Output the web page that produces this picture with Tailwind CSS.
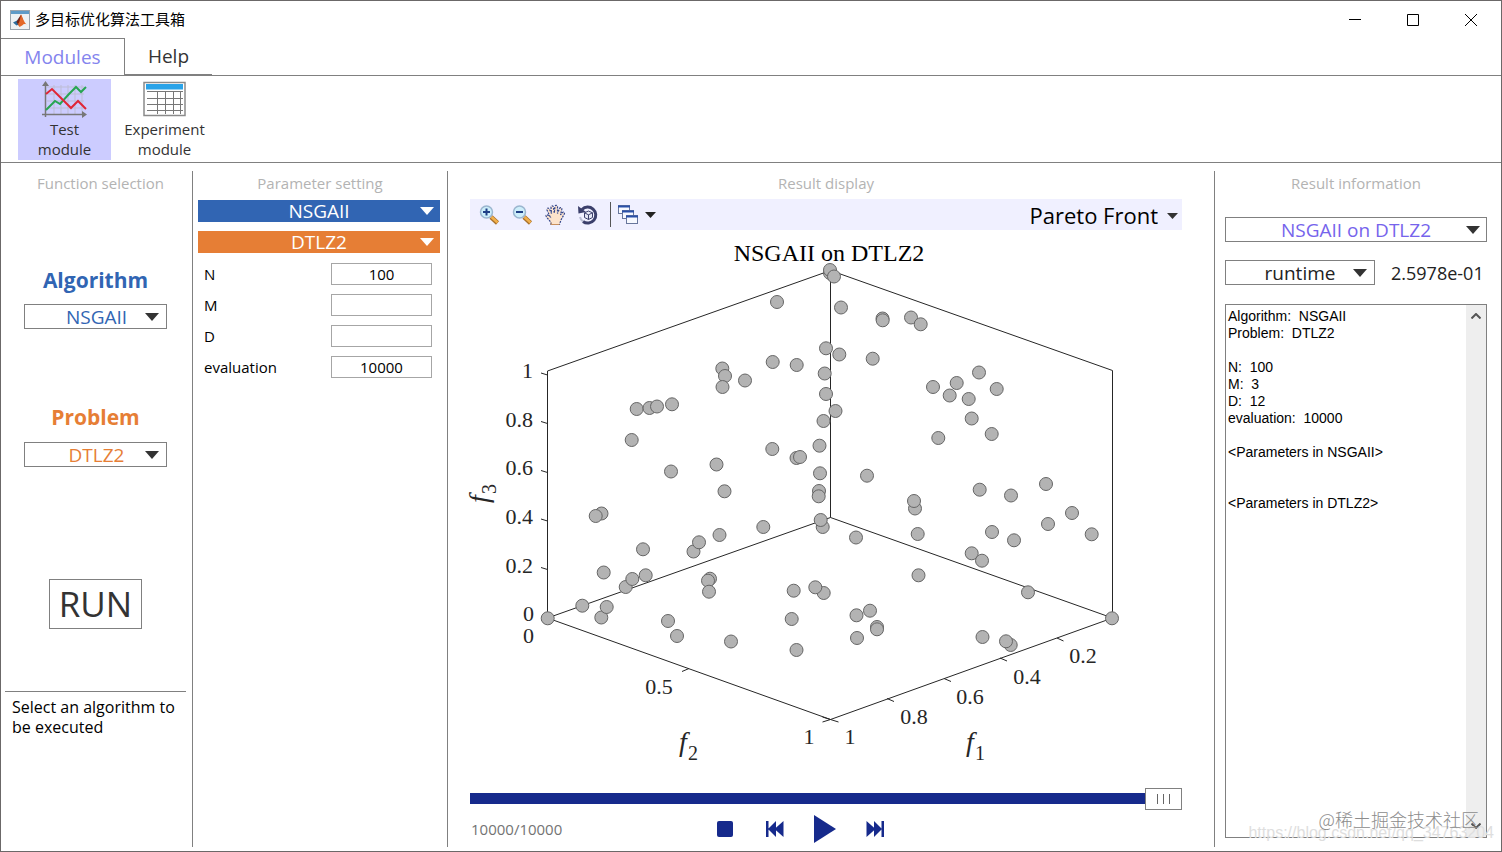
<!DOCTYPE html>
<html lang="zh-CN">
<head>
    <meta charset="UTF-8">
    <meta name="viewport" content="width=device-width, initial-scale=1.0">
    <title>多目标优化算法工具箱</title>
    <script src="https://cdn.jsdelivr.net/npm/@tailwindcss/browser@4"></script>
</head>
<body class="relative flex h-screen min-h-[852px] flex-col border border-[#6b6868] bg-white font-['Open_Sans','Noto_Sans_CJK_SC',sans-serif] text-[15px] text-black">

    <!-- Title bar -->
    <header class="flex h-[37px] shrink-0 items-center pr-px">
        <svg class="ml-[9px] h-5 w-5" viewBox="0 0 20 20">
            <rect x=".5" y=".5" width="19" height="19" fill="#eef1f4" stroke="#9aa4ae"/>
            <rect x="1" y="1" width="18" height="3" fill="#5f9bc8"/>
            <path d="M3 12.500l4-2 4-5-2 9-2.500 1z" fill="#2c6c9c"/>
            <path d="M6.500 12l4.500-7.500L13 10l-4 6z" fill="#7c2414"/>
            <path d="M11 4.500c1.500 2 2.500 7 5.500 10-2-.8-3-.4-4 .7L9.500 17 8 14c2-2 2-6 3-9.500z" fill="#e3682a"/>
        </svg>
        <h1 class="ml-[5px] flex-1">多目标优化算法工具箱</h1>
        <button class="flex h-full w-[58px] items-center justify-center" aria-label="Minimize">
            <svg class="h-3 w-3" viewBox="0 0 12 12" stroke="#000" fill="none"><path d="M0 5.500h12"/></svg>
        </button>
        <button class="flex h-full w-[58px] items-center justify-center" aria-label="Maximize">
            <svg class="h-3 w-3" viewBox="0 0 12 12" stroke="#000" fill="none"><path d="M.5.500h11v11H.5z"/></svg>
        </button>
        <button class="flex h-full w-[58px] items-center justify-center" aria-label="Close">
            <svg class="h-3 w-3" viewBox="0 0 12 12" stroke="#000" fill="none"><path d="M0 0l12 12M12 0L0 12"/></svg>
        </button>
    </header>

    <!-- Tabs -->
    <nav class="flex h-[38px] shrink-0 border-b border-[#808080] text-[19px]">
        <button class="w-[124px] border-t border-r border-[#808080] text-[#8484ee]">Modules</button>
        <button class="w-[87px] border-b border-[#808080] text-[#333]">Help</button>
    </nav>

    <!-- Module toolbar -->
    <div class="flex h-[87px] shrink-0 items-start gap-[7px] border-b border-[#808080] pt-[3px] pl-[17px] leading-5 text-[#333]">
        <button class="flex h-[81px] w-[93px] flex-col items-center bg-[#ccccff]">
            <svg class="mt-[2px] mb-px h-[37px] w-[46px]" viewBox="0 0 46 37" fill="none">
                <path d="M5 6h37M5 13h37M5 20h37M5 27h37M12 4v29M19 4v29M26 4v29M33 4v29M40 4v29" stroke="#bdbdd6"/>
                <path d="M3.500 36V3M0 33.500h42" stroke="#777" stroke-width="1.500"/>
                <path d="M3.500 0L7 5H0zM45 33.500L40 30v7z" fill="#777"/>
                <path d="M4 29l9-9 5 3 9-10 7-7 5 5 5-5" stroke="#27a552" stroke-width="2"/>
                <path d="M4 13l6-5 19 19 7-7 8 8" stroke="#e02536" stroke-width="2"/>
            </svg>
            <span>Test<br>module</span>
        </button>
        <button class="flex h-[81px] w-[93px] flex-col items-center">
            <svg class="mt-[2px] mb-px h-[37px] w-[44px]" viewBox="0 0 44 37" fill="none">
                <rect x="1" y="1.500" width="41" height="33" fill="#fff" stroke="#8a8a8a" stroke-width="1.500"/>
                <rect x="3" y="3" width="37" height="5.500" fill="#2aa3e8"/>
                <path d="M4 10.500h36M4 17.500h36M4 23.500h36M4 29.500h36M14.500 10v23M22.500 10v23M30.500 10v23M37.500 10v23" stroke="#777"/>
            </svg>
            <span>Experiment<br>module</span>
        </button>
    </div>

    <main class="flex min-h-0 flex-1 pt-2 pb-1">

        <!-- Function selection -->
        <section class="flex w-[192px] shrink-0 flex-col border-r border-[#808080]">
            <h2 class="pl-2 text-center leading-6 text-[#b3b3b3]">Function selection</h2>
            <div class="flex flex-col items-center pr-[6px] pl-1">
                <label for="algorithm" class="mt-[69px] text-[21px] leading-8 font-bold text-[#3165b3]">Algorithm</label>
                <div class="relative mt-2 h-[25px] w-[143px]">
                    <select id="algorithm" class="block h-full w-full appearance-none border border-[#808080] bg-white pr-[18px] pl-5 text-[19px] leading-[22px] text-[#3165b3] [text-align-last:center]">
                        <option>NSGAII</option>
                    </select>
                    <svg class="pointer-events-none absolute top-[9px] right-2 h-2 w-[14px]" viewBox="0 0 14 8" fill="#333"><path d="M0 0h14L7 8z"/></svg>
                </div>
                <label for="problem" class="mt-[72px] text-[21px] leading-8 font-bold text-[#e67e35]">Problem</label>
                <div class="relative mt-[9px] h-[25px] w-[143px]">
                    <select id="problem" class="block h-full w-full appearance-none border border-[#808080] bg-white pr-[18px] pl-5 text-[19px] leading-[22px] text-[#e67e35] [text-align-last:center]">
                        <option>DTLZ2</option>
                    </select>
                    <svg class="pointer-events-none absolute top-[9px] right-2 h-2 w-[14px]" viewBox="0 0 14 8" fill="#333"><path d="M0 0h14L7 8z"/></svg>
                </div>
                <button class="mt-28 h-[50px] w-[93px] border border-[#808080] text-[35px] leading-[48px] text-[#333]">RUN</button>
                <hr class="mt-[62px] w-full border-[#808080]">
                <p class="mt-[5px] w-full pl-[7px] text-base leading-5">Select an algorithm to be executed</p>
            </div>
        </section>

        <!-- Parameter setting -->
        <section class="w-[255px] shrink-0 border-r border-[#808080]">
            <h2 class="text-center leading-6 text-[#b3b3b3]">Parameter setting</h2>
            <div class="mt-[5px] flex flex-col gap-[9px] pr-[7px] pl-[5px] leading-[22px]">
                <button class="flex h-[22px] items-center bg-[#3165b3] pr-[6px] pl-5 text-[19px] leading-[22px] text-white">
                    <span class="flex-1">NSGAII</span>
                    <svg class="h-2 w-[14px]" viewBox="0 0 14 8" fill="#fff"><path d="M0 0h14L7 8z"/></svg>
                </button>
                <button class="flex h-[22px] items-center bg-[#e67e35] pr-[6px] pl-5 text-[19px] leading-[22px] text-white">
                    <span class="flex-1">DTLZ2</span>
                    <svg class="h-2 w-[14px]" viewBox="0 0 14 8" fill="#fff"><path d="M0 0h14L7 8z"/></svg>
                </button>
                <div class="mt-px flex items-center justify-between pr-2 pl-[6px]">
                    <label for="param-n">N</label>
                    <input id="param-n" type="text" value="100" class="h-[22px] w-[101px] border border-[#a6a6a6] text-center">
                </div>
                <div class="flex items-center justify-between pr-2 pl-[6px]">
                    <label for="param-m">M</label>
                    <input id="param-m" type="text" class="h-[22px] w-[101px] border border-[#a6a6a6] text-center">
                </div>
                <div class="flex items-center justify-between pr-2 pl-[6px]">
                    <label for="param-d">D</label>
                    <input id="param-d" type="text" class="h-[22px] w-[101px] border border-[#a6a6a6] text-center">
                </div>
                <div class="flex items-center justify-between pr-2 pl-[6px]">
                    <label for="param-evaluation">evaluation</label>
                    <input id="param-evaluation" type="text" value="10000" class="h-[22px] w-[101px] border border-[#a6a6a6] text-center">
                </div>
            </div>
        </section>

        <!-- Result display -->
        <section class="flex min-w-0 flex-1 flex-col border-r border-[#808080] pr-8 pl-[22px]">
            <h2 class="text-center leading-6 text-[#b3b3b3]">Result display</h2>
            <div class="mt-1 flex h-[31px] shrink-0 items-center bg-[#f0f0ff] pl-[2px]">
                <button class="flex w-[33px] justify-center" aria-label="Zoom in">
                    <svg class="h-[22px] w-[22px]" viewBox="0 0 22 22" fill="none">
                        <path d="M13 13l6.500 6" stroke="#a8702a" stroke-width="4.500"/>
                        <path d="M13.500 13l6 5.500" stroke="#f2b04c" stroke-width="2.500"/>
                        <circle cx="8.500" cy="8" r="6" fill="#cdeefa" stroke="#9bb6cf" stroke-width="1.500"/>
                        <path d="M5 8h7M8.500 4.500v7" stroke="#1f3f86" stroke-width="2"/>
                    </svg>
                </button>
                <button class="flex w-[33px] justify-center" aria-label="Zoom out">
                    <svg class="h-[22px] w-[22px]" viewBox="0 0 22 22" fill="none">
                        <path d="M13 13l6.500 6" stroke="#a8702a" stroke-width="4.500"/>
                        <path d="M13.500 13l6 5.500" stroke="#f2b04c" stroke-width="2.500"/>
                        <circle cx="8.500" cy="8" r="6" fill="#cdeefa" stroke="#9bb6cf" stroke-width="1.500"/>
                        <path d="M5 8h7" stroke="#1f3f86" stroke-width="2"/>
                    </svg>
                </button>
                <button class="flex w-[33px] justify-center" aria-label="Pan">
                    <svg class="h-[22px] w-[22px]" viewBox="0 0 22 22" fill="#fde3cb" stroke="#35488c">
                        <path d="M7 20.500v-2L2.500 13c-1.500-2 .5-3 2-1.500l1.500 1-3-6.500c-.5-2 1.500-2.500 2.300-1l2.200 4.500L7 3.500C7 1.500 9 1.500 9.400 3l.9 6 .7-6.500c.3-1.600 2.400-1.500 2.500.2V9.500l2-5c.8-1.500 2.600-.8 2.300.8L16.500 11l2-2.500c1.200-1 2.500.2 1.800 1.500L17 16l-1.500 4.500z" stroke-width="1.200" stroke-dasharray="2 1"/>
                        <path d="M7 20.500v-2M15.500 20.500H7" stroke="#c9905e"/>
                    </svg>
                </button>
                <button class="flex w-[33px] justify-center" aria-label="Rotate 3D">
                    <svg class="h-[22px] w-[22px]" viewBox="0 0 22 22" fill="none">
                        <path d="M5 5.500A8 8 0 1 1 6 17.500" stroke="#3b3f6b" stroke-width="3"/>
                        <path d="M1 2l.5 7.500L9 8z" fill="#3b3f6b"/>
                        <path d="M3 13a8 8 0 0 0 3 4.500" stroke="#b9bdd3" stroke-width="2"/>
                        <path d="M11.500 7l4 1.800v4.700l-4 2-4-2V8.800zM7.500 8.800l4 2 4-2M11.500 10.800v4.700" fill="#e4e6f4" stroke="#3b3f6b"/>
                    </svg>
                </button>
                <div class="mx-[6px] h-[25px] w-px bg-[#555]"></div>
                <button class="flex items-center gap-[6px]" aria-label="Figure windows">
                    <svg class="h-[22px] w-[22px]" viewBox="0 0 22 22" fill="#f7f9ff" stroke="#68769c">
                        <rect x="1.500" y="1.500" width="11" height="8"/><path d="M1 2.500h12" stroke="#2a50a8" stroke-width="2"/>
                        <rect x="5.500" y="6.500" width="11" height="8"/><path d="M5 7.500h12" stroke="#2a50a8" stroke-width="2"/>
                        <rect x="9.500" y="11.500" width="11" height="8"/><path d="M9 12.500h12" stroke="#2a50a8" stroke-width="2"/>
                    </svg>
                    <svg class="h-[6px] w-[11px]" viewBox="0 0 11 6" fill="#222"><path d="M0 0h11L5.500 6z"/></svg>
                </button>
                <div class="relative ml-auto">
                    <select aria-label="Display type" class="block h-[30px] w-[170px] appearance-none pr-6 text-[22px] leading-[30px] [text-align-last:right]">
                        <option>Pareto Front</option>
                    </select>
                    <svg class="pointer-events-none absolute top-[13px] right-1 h-[6px] w-[11px]" viewBox="0 0 11 6" fill="#333"><path d="M0 0h11L5.500 6z"/></svg>
                </div>
            </div>

            <svg class="min-h-0 w-full flex-1 overflow-visible font-['Liberation_Serif',serif]" viewBox="470 230 712 558" fill="#262626">
                <g fill="none" stroke="#262626">
                    <path d="M547.500 618V371L830.500 270.500 1112.500 370.500V618L830.500 517.500 547.500 618 830.500 719.500 1112.500 618M830.500 270.500v247"/>
                    <path d="M541 373l6.500 2M541 421.500l6.500 2M541 470.500l6.500 2M541 519l6.500 2M541 567.500l6.500 2M541 620.500l6.500-2M682 671.500l7-3M822.500 722l8-2.500M838.500 722l-16-5M887 698.500l7 3M944 678.500l7 3M1000 658l7 3M1057 638l6.500 3"/>
                </g>
                <text x="829" y="261" font-size="24" fill="#000" text-anchor="middle">NSGAII on DTLZ2</text>
                <g font-size="22" text-anchor="end">
                    <text x="533" y="378">1</text>
                    <text x="533" y="427">0.8</text>
                    <text x="533" y="475">0.6</text>
                    <text x="533" y="524">0.4</text>
                    <text x="533" y="573">0.2</text>
                    <text x="534" y="621">0</text>
                    <text x="534" y="643">0</text>
                </g>
                <g font-size="22" text-anchor="middle">
                    <text x="659" y="694">0.5</text>
                    <text x="809" y="744">1</text>
                    <text x="850" y="744">1</text>
                    <text x="914" y="724">0.8</text>
                    <text x="970" y="704">0.6</text>
                    <text x="1027" y="684">0.4</text>
                    <text x="1083" y="663">0.2</text>
                </g>
                <text x="679" y="751" font-size="28" font-style="italic">f<tspan x="688" y="760" font-size="20" font-style="normal">2</tspan></text>
                <text x="966" y="751" font-size="28" font-style="italic">f<tspan x="975" y="760" font-size="20" font-style="normal">1</tspan></text>
                <text transform="translate(488 503) rotate(-90)" font-size="28" font-style="italic">f<tspan x="9" y="8" font-size="20" font-style="normal">3</tspan></text>
                <g id="points" fill="#b3b3b3" stroke="#666"></g>
            </svg>

            <input type="range" min="0" max="10000" value="10000" aria-label="Evaluations"
                   class="h-[22px] w-full shrink-0 appearance-none bg-[linear-gradient(#162a8c,#162a8c)] bg-[length:100%_11px] bg-[position:0_5px] bg-no-repeat
                          [&::-webkit-slider-thumb]:h-[22px] [&::-webkit-slider-thumb]:w-[37px] [&::-webkit-slider-thumb]:appearance-none
                          [&::-webkit-slider-thumb]:border [&::-webkit-slider-thumb]:border-[#808080] [&::-webkit-slider-thumb]:bg-white
                          [&::-webkit-slider-thumb]:bg-[repeating-linear-gradient(90deg,#666_0_1px,transparent_1px_6px)]
                          [&::-webkit-slider-thumb]:bg-[length:13px_10px] [&::-webkit-slider-thumb]:bg-center [&::-webkit-slider-thumb]:bg-no-repeat">
            <div class="flex h-[37px] shrink-0 items-center text-[#737373]">
                <output class="w-[230px] shrink-0 pt-[2px] pl-px">10000/10000</output>
                <button class="flex w-[50px] justify-center" aria-label="Stop">
                    <svg class="h-4 w-4" viewBox="0 0 16 16" fill="#162a8c"><rect width="16" height="16" rx="2"/></svg>
                </button>
                <button class="flex w-[50px] justify-center" aria-label="Back">
                    <svg class="h-4 w-[18px]" viewBox="0 0 18 16" fill="#162a8c"><path d="M0 0h2.500v16H0zM2 8L10 0v16zM8.500 8L17.500 0v16z"/></svg>
                </button>
                <button class="flex w-[50px] justify-center" aria-label="Play">
                    <svg class="h-7 w-[22px]" viewBox="0 0 22 28" fill="#162a8c"><path d="M0 0l22 14L0 28z"/></svg>
                </button>
                <button class="flex w-[50px] justify-center" aria-label="Forward">
                    <svg class="h-4 w-[18px]" viewBox="0 0 18 16" fill="#162a8c"><path d="M15.500 0H18v16h-2.500zM16 8L8 0v16zM9.500 8L.5 0v16z"/></svg>
                </button>
            </div>
        </section>

        <!-- Result information -->
        <section class="flex w-[286px] shrink-0 flex-col pr-[14px] pl-[10px]">
            <h2 class="text-center leading-6 text-[#b3b3b3]">Result information</h2>
            <div class="relative mt-[22px] h-[25px]">
                <select aria-label="Result" class="block h-full w-full appearance-none border border-[#808080] bg-white text-[19px] leading-[22px] text-[#7664ec] [text-align-last:center]">
                    <option>NSGAII on DTLZ2</option>
                </select>
                <svg class="pointer-events-none absolute top-[9px] right-[7px] h-2 w-[14px]" viewBox="0 0 14 8" fill="#333"><path d="M0 0h14L7 8z"/></svg>
            </div>
            <div class="mt-[18px] flex h-[25px] items-center text-lg">
                <div class="relative h-[25px] w-[150px]">
                    <select id="metric" aria-label="Metric" class="block h-full w-full appearance-none border border-[#808080] bg-white text-[19px] leading-[22px] text-[#222] [text-align-last:center]">
                        <option>runtime</option>
                    </select>
                    <svg class="pointer-events-none absolute top-[9px] right-2 h-2 w-[14px]" viewBox="0 0 14 8" fill="#333"><path d="M0 0h14L7 8z"/></svg>
                </div>
                <output for="metric" class="ml-4 text-[#222]">2.5978e-01</output>
            </div>
            <div class="mt-[19px] mb-[9px] flex min-h-0 flex-1 border border-[#808080]">
                <textarea readonly aria-label="Details" class="min-w-0 flex-1 resize-none overflow-hidden pt-[3px] pl-[2px] font-['Liberation_Sans',Arial,sans-serif] text-[14px] leading-[17px] outline-none">Algorithm:  NSGAII
Problem:  DTLZ2

N:  100
M:  3
D:  12
evaluation:  10000

&lt;Parameters in NSGAII&gt;


&lt;Parameters in DTLZ2&gt;</textarea>
                <div class="flex w-5 flex-col items-center justify-between bg-[#eeeeee] py-2">
                    <button aria-label="Scroll up"><svg class="h-[6px] w-[10px]" viewBox="0 0 10 6" fill="none" stroke="#555" stroke-width="2"><path d="M.5 5.500L5 1l4.500 4.500"/></svg></button>
                    <button aria-label="Scroll down"><svg class="h-[6px] w-[10px]" viewBox="0 0 10 6" fill="none" stroke="#555" stroke-width="2"><path d="M.5.500L5 5 9.500.500"/></svg></button>
                </div>
            </div>
        </section>
    </main>

    <!-- Watermarks -->
    <p class="pointer-events-none absolute right-[7px] bottom-2 font-['Liberation_Sans',sans-serif] text-base leading-5 text-[#dedede]">https://blog.csdn.net/qq_34763204</p>
    <p class="pointer-events-none absolute right-[22px] bottom-5 font-['Noto_Sans_CJK_SC',sans-serif] text-[18px] leading-6 font-light text-[#8c8c8c]">@稀土掘金技术社区</p>

    <script>
        // Marker centres of the final population, in the plot's own units
        const points = [
            [830, 273], [830, 270], [834, 276.5], [777, 302], [841, 307.5], [882.5, 318.5], [882.7, 320.3], [911, 317.5], [920.7, 324.3],
            [826, 348.3], [839.3, 354.5], [872.7, 358.7], [722.3, 368.5], [725, 376], [722.5, 387], [745, 380.5],
            [772.7, 362], [796.7, 365], [824.7, 373.5], [826, 394], [835.5, 411], [823.5, 421],
            [979, 372.5], [933, 387], [949.7, 395.5], [956.7, 383], [968.7, 399], [996.7, 389], [971.7, 418.5], [991.7, 434], [938.3, 438],
            [636.7, 409], [649.5, 408], [657, 406.5], [672, 404.3], [631.7, 440], [772.3, 449], [796.5, 458], [800, 457],
            [819.5, 445.7], [671, 471.5], [716.5, 464.5], [820, 473.3], [724.5, 491.3], [819, 491], [818.7, 496.3],
            [867, 475.7], [979.7, 489.7], [1011, 495.5], [1046, 484], [1072, 513], [1048, 524], [915, 508.5], [914, 501], [917.7, 534],
            [601.5, 513.5], [595.7, 516], [822.7, 527], [820.7, 520], [763.3, 527], [719.5, 535], [693.5, 551.5], [699, 542.3],
            [856, 537.5], [992, 532], [1014, 540.3], [1091.7, 534.3], [971.7, 553.3], [982, 560.7], [918.5, 575.3], [1028, 592.3],
            [643, 549.3], [603.7, 572.5], [645.7, 575.3], [625.7, 587], [632.3, 579], [582.3, 605.7], [601.3, 617.5], [606.7, 607],
            [547.7, 618.3], [668, 621], [677, 636], [710, 578.7], [708, 580.7], [709, 591.7], [793.7, 590.7], [823.7, 593], [815.3, 587.3],
            [791.7, 619], [731, 641.5], [796.5, 650], [856.5, 615.3], [870, 610.7], [877, 627], [877, 629.3], [857, 638],
            [982.5, 637], [1010.7, 645], [1006, 641.3], [1112, 618.3]
        ];

        const group = document.getElementById('points');
        points.forEach(([x, y]) => {
            const circle = document.createElementNS('http://www.w3.org/2000/svg', 'circle');
            circle.setAttribute('cx', x);
            circle.setAttribute('cy', y);
            circle.setAttribute('r', 6.5);
            group.appendChild(circle);
        });
    </script>
</body>
</html>
